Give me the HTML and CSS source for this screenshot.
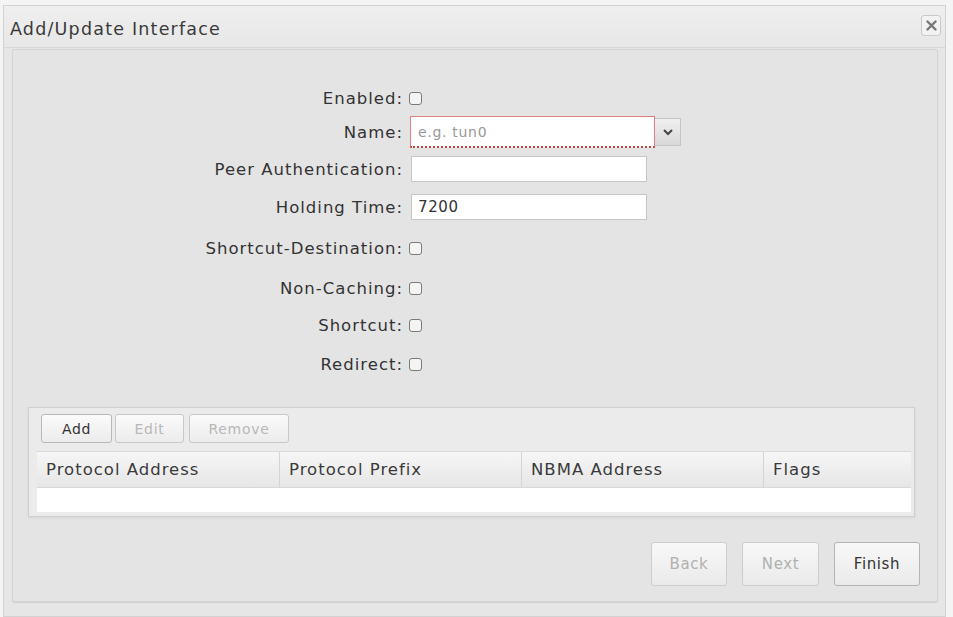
FILE: index.html
```html
<!DOCTYPE html>
<html lang="en">
<head>
  <meta charset="UTF-8" />
  <title>Add/Update Interface</title>
  <link rel="stylesheet" href="styles.css">
</head>
<body>

  <div class="dialog">
    <div class="titlebar">
      <span class="title">Add/Update Interface</span>
      <span class="close">
        <svg width="11" height="11" viewBox="0 0 11 11"><path d="M1.5 1.5 L9.5 9.5 M9.5 1.5 L1.5 9.5" stroke="#777" stroke-width="2.4" stroke-linecap="round"/></svg>
      </span>
    </div>

    <div class="panel">
      <div class="form">
        <label>Enabled:</label>
        <div><span class="check"></span></div>

        <label>Name:</label>
        <div class="combo">
          <input type="text" class="name-input" placeholder="e.g. tun0" />
          <span class="combo-arrow">
            <svg width="10" height="8" viewBox="0 0 10 8"><path d="M1 2 L5 6 L9 2" fill="none" stroke="#444" stroke-width="2"/></svg>
          </span>
        </div>

        <label>Peer Authentication:</label>
        <div><input type="text" class="text-input" /></div>

        <label>Holding Time:</label>
        <div><input type="text" class="text-input" value="7200" /></div>

        <label>Shortcut-Destination:</label>
        <div><span class="check"></span></div>

        <label>Non-Caching:</label>
        <div><span class="check"></span></div>

        <label>Shortcut:</label>
        <div><span class="check"></span></div>

        <label>Redirect:</label>
        <div><span class="check"></span></div>
      </div>

      <div class="grid-panel">
        <div class="toolbar">
          <button class="tool-btn add">Add</button>
          <button class="tool-btn edit" disabled>Edit</button>
          <button class="tool-btn remove" disabled>Remove</button>
        </div>
        <div class="grid-head">
          <div class="col c1">Protocol Address</div>
          <div class="col c2">Protocol Prefix</div>
          <div class="col c3">NBMA Address</div>
          <div class="col c4">Flags</div>
        </div>
        <div class="grid-body"></div>
      </div>

      <div class="footer">
        <button class="nav-btn back" disabled>Back</button>
        <button class="nav-btn next" disabled>Next</button>
        <button class="nav-btn finish">Finish</button>
      </div>
    </div>
  </div>

</body>
</html>
```

FILE: styles.css
```css
body {
  margin: 0;
  padding: 0;
  background: #f4f4f4;
  font-family: 'DejaVu Sans', Verdana, sans-serif;
  color: #333;
  font-size: 16.5px;
  letter-spacing: 1px;
}

.dialog {
  margin: 5px 0 0 3px;
  width: 943px;
  height: 612px;
  background: #e6e6e6;
  border: 1px solid #d2d2d2;
  box-sizing: border-box;
  display: flex;
  flex-direction: column;
}

.titlebar {
  height: 41px;
  display: flex;
  align-items: center;
  justify-content: space-between;
  padding: 0 4px 0 6px;
  background: linear-gradient(#efefef, #e7e7e7);
  border-bottom: 1px solid #d8d8d8;
  flex-shrink: 0;
}

.title {
  font-size: 17.5px;
  letter-spacing: 1.2px;
  color: #3a3a3a;
  margin-top: 4px;
}

.close {
  width: 18px;
  height: 19px;
  border: 1px solid #cacaca;
  border-radius: 3px;
  background: #f2f2f2;
  display: flex;
  align-items: center;
  justify-content: center;
  margin-top: -2px;
}

.panel {
  margin: 1px 7px 14px 8px;
  flex: 1;
  border: 1px solid #d4d4d4;
  border-radius: 2px;
  background: #e4e4e4;
  display: flex;
  flex-direction: column;
  box-shadow: 0 1px 1px #d0d0d0;
}

.form {
  display: grid;
  grid-template-columns: 390px 1fr;
  grid-template-rows: 34px 34px 40px 36px 46px 34px 40px 38px;
  column-gap: 6px;
  align-items: center;
  margin-top: 31px;
}

.form label {
  text-align: right;
  color: #333;
}

.check {
  display: block;
  width: 11px;
  height: 11px;
  border: 1px solid #7a7a7a;
  border-radius: 3px;
  background: #f4f4f4;
}

.combo {
  display: flex;
  align-items: center;
}

.name-input {
  width: 245px;
  height: 32px;
  box-sizing: border-box;
  border: 1px solid #e08080;
  border-bottom: 2px dotted #d04040;
  background: #fff;
  font-family: inherit;
  font-size: 14px;
  letter-spacing: 0.7px;
  padding: 0 7px;
  margin-left: 1px;
}

.name-input::placeholder {
  color: #999;
}

.combo-arrow {
  width: 26px;
  height: 28px;
  display: flex;
  align-items: center;
  justify-content: center;
  background: linear-gradient(#f0f0f0, #d8d8d8);
  border: 1px solid #c4c4c4;
  border-left: none;
  box-sizing: border-box;
}

.text-input {
  width: 236px;
  height: 26px;
  box-sizing: border-box;
  border: 1px solid #c6c6c6;
  background: #fff;
  font-family: inherit;
  font-size: 15px;
  letter-spacing: 0.6px;
  color: #333;
  padding: 0 6px;
  margin-left: 2px;
}

.grid-panel {
  margin: 24px 22px 0 15px;
  border: 1px solid #d0d0d0;
  background: #ebebeb;
  padding: 6px 3px 4px 8px;
  box-shadow: 0 1px 2px #d6d6d6;
}

.toolbar {
  display: flex;
  gap: 3px;
  margin-bottom: 8px;
  margin-left: 4px;
}

.tool-btn {
  height: 29px;
  font-family: inherit;
  font-size: 14px;
  letter-spacing: 0.7px;
  border: 1px solid #c8c8c8;
  border-radius: 3px;
  background: linear-gradient(#fafafa, #ececec);
  color: #333;
  padding: 0;
}

.tool-btn.add {
  width: 71px;
  border-color: #b8b8b8;
}

.tool-btn.edit {
  width: 69px;
  color: #b8b8b8;
}

.tool-btn.remove {
  width: 100px;
  color: #b8b8b8;
  margin-left: 2px;
}

.grid-head {
  display: flex;
  height: 35px;
  background: linear-gradient(#f6f6f6, #e6e6e6);
  border-top: 1px solid #d8d8d8;
  border-bottom: 1px solid #d8d8d8;
}

.col {
  display: flex;
  align-items: center;
  padding-left: 9px;
  border-right: 1px solid #d4d4d4;
  box-sizing: border-box;
  color: #3a3a3a;
}

.c1 { width: 243px; }
.c2 { width: 242px; }
.c3 { width: 242px; }
.c4 { flex: 1; border-right: none; }

.grid-body {
  height: 24px;
  background: #fff;
}

.footer {
  display: flex;
  justify-content: flex-end;
  gap: 15px;
  margin: 25px 17px 0 0;
}

.nav-btn {
  height: 44px;
  font-family: inherit;
  font-size: 15px;
  letter-spacing: 0.6px;
  border: 1px solid #cdcdcd;
  border-radius: 3px;
  background: linear-gradient(#f8f8f8, #eaeaea);
  color: #b0b0b0;
  padding: 0;
}

.nav-btn.back { width: 76px; }
.nav-btn.next { width: 77px; }
.nav-btn.finish {
  width: 86px;
  color: #333;
  border-color: #b4b4b4;
}
```
